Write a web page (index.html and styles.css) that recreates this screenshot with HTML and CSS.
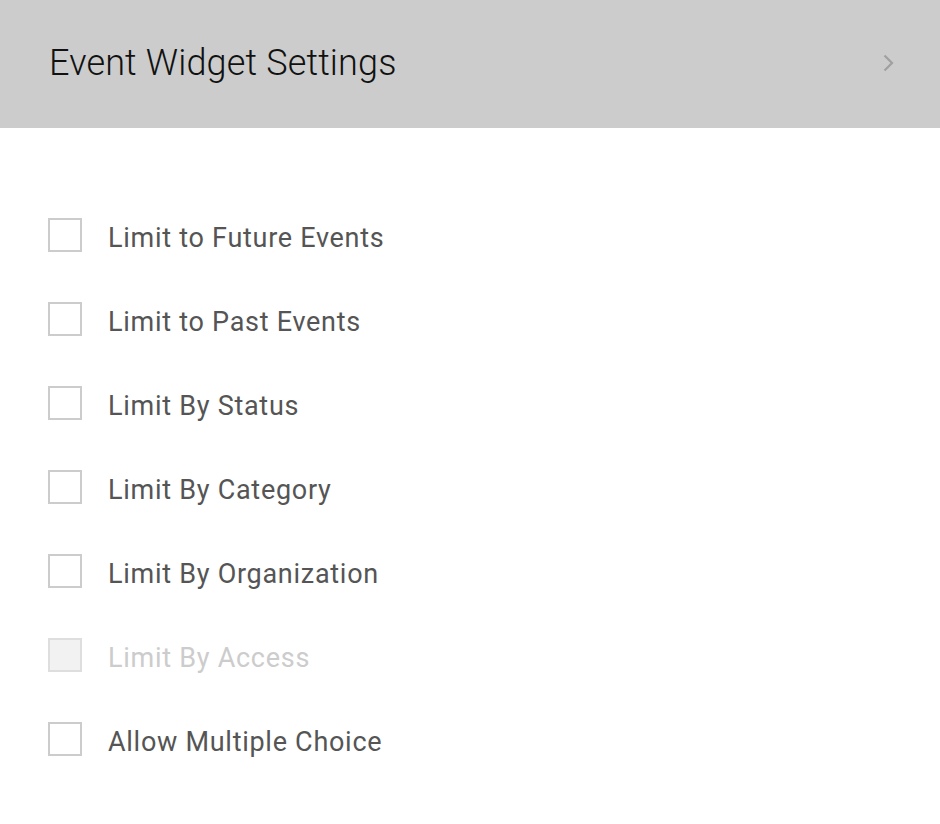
FILE: index.html
```html
<!DOCTYPE html>
<html>
<head>
<meta charset="utf-8">
<link rel="stylesheet" href="styles.css">
</head>
<body>
<header class="header">
  <h1 class="title">Event Widget Settings</h1>
  <svg class="chevron" width="12" height="20" viewBox="0 0 12 20"><path d="M2.5 2.5 L10 10 L2.5 17.5" fill="none" stroke="#a0a0a0" stroke-width="2.2"/></svg>
</header>
<main class="list">
  <label class="row"><span class="box"></span><span class="label">Limit to Future Events</span></label>
  <label class="row"><span class="box"></span><span class="label">Limit to Past Events</span></label>
  <label class="row"><span class="box"></span><span class="label">Limit By Status</span></label>
  <label class="row"><span class="box"></span><span class="label">Limit By Category</span></label>
  <label class="row"><span class="box"></span><span class="label">Limit By Organization</span></label>
  <label class="row disabled"><span class="box"></span><span class="label">Limit By Access</span></label>
  <label class="row"><span class="box"></span><span class="label">Allow Multiple Choice</span></label>
</main>
</body>
</html>
```
FILE: styles.css
```css
html, body { margin: 0; padding: 0; background: #fff; }
body { font-family: Roboto, "Noto Sans", sans-serif; width: 940px; height: 824px; overflow: hidden; }
.header {
  height: 128px;
  background: #cccccc;
  display: flex;
  align-items: center;
  justify-content: space-between;
  padding: 0 46px 0 49px;
  box-sizing: border-box;
}
.title {
  margin: -2px 0 0 0;
  font-size: 36px;
  font-weight: 300;
  color: #111;
  letter-spacing: 0.15px;
}
.chevron { display: block; margin-top: -2px; }
.list {
  display: flex;
  flex-direction: column;
  gap: 50px;
  padding: 90px 0 0 48px;
}
.row { display: flex; align-items: center; height: 34px; }
.box {
  width: 34px; height: 34px;
  box-sizing: border-box;
  border: 2px solid #cccccc;
  background: #fff;
  flex: none;
}
.label {
  margin: 6px 0 0 26px;
  font-size: 27px;
  letter-spacing: 0.72px;
  color: #555;
}
.disabled .box { background: #f2f2f2; border-color: #dedede; }
.disabled .label { color: #cccccc; }
```
